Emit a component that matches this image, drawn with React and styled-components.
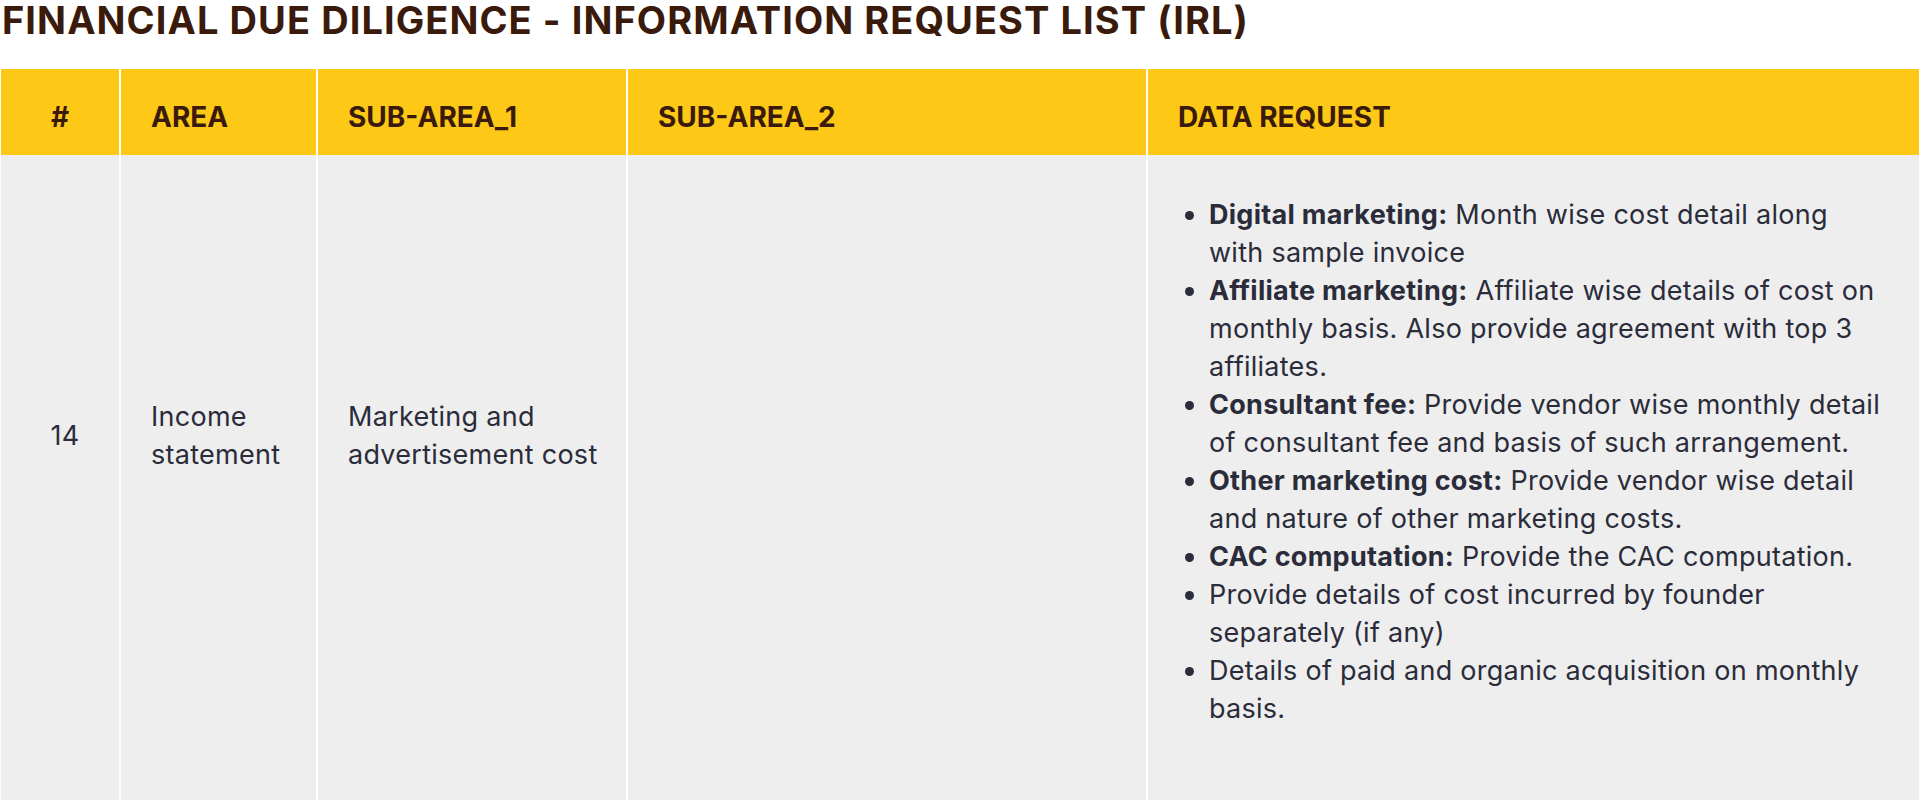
import React from "react";
import styled, { createGlobalStyle } from "styled-components";

const Global = createGlobalStyle`
  html, body { margin: 0; padding: 0; background: #ffffff; }
  body { font-family: Inter, "Noto Sans", sans-serif; -webkit-font-smoothing: antialiased; }
  * { box-sizing: border-box; }
`;

const COLS = "120px 197px 310px 520px 773px";

const Page = styled.div`
  width: 1920px;
  display: flex;
  flex-direction: column;
`;

const Title = styled.h1`
  margin: 0 0 29px 0;
  padding-left: 2px;
  font-family: Inter, sans-serif;
  font-size: 38px;
  line-height: 40px;
  font-weight: 700;
  color: #3a1a0a;
  letter-spacing: 0.028em;
  text-transform: uppercase;
  white-space: nowrap;
`;

const Table = styled.div`
  display: flex;
  flex-direction: column;
`;

const HeadRow = styled.div`
  display: grid;
  grid-template-columns: ${COLS};
  height: 86px;
  background: #fdc816;
`;

const HeadCell = styled.div`
  display: flex;
  align-items: center;
  justify-content: ${(p) => (p.$center ? "center" : "flex-start")};
  padding: 10px 30px 0;
  border-left: 1px solid #ffffff;
  border-right: 1px solid #ffffff;
  font-size: 28px;
  line-height: 34px;
  font-weight: 700;
  color: #3a1a0a;
`;

const BodyRow = styled.div`
  display: grid;
  grid-template-columns: ${COLS};
  background: #eeeeee;
`;

const Cell = styled.div`
  display: flex;
  align-items: center;
  justify-content: ${(p) => (p.$center ? "center" : "flex-start")};
  text-align: ${(p) => (p.$center ? "center" : "left")};
  padding: 0 20px 91px 30px;
  border-left: 1px solid #ffffff;
  border-right: 1px solid #ffffff;
  font-size: 27px;
  line-height: 38px;
  letter-spacing: 0.01em;
  color: #2a2c3a;
`;

const DataCell = styled.div`
  padding: 41px 38px 80px 30px;
  border-left: 1px solid #ffffff;
  border-right: 1px solid #ffffff;
  font-size: 27px;
  line-height: 38px;
  letter-spacing: 0.01em;
  color: #2a2c3a;
`;

const List = styled.ul`
  margin: 0;
  padding-left: 31px;
  list-style: disc;
`;

const Item = styled.li`
  padding: 0;
`;

const Lead = styled.strong`
  font-weight: 700;
`;

const items = [
  { lead: "Digital marketing:", text: "Month wise cost detail along with sample invoice" },
  { lead: "Affiliate marketing:", text: "Affiliate wise details of cost on monthly basis. Also provide agreement with top 3 affiliates." },
  { lead: "Consultant fee:", text: "Provide vendor wise monthly detail of consultant fee and basis of such arrangement." },
  { lead: "Other marketing cost:", text: "Provide vendor wise detail and nature of other marketing costs." },
  { lead: "CAC computation:", text: "Provide the CAC computation." },
  { lead: null, text: "Provide details of cost incurred by founder separately (if any)" },
  { lead: null, text: "Details of paid and organic acquisition on monthly basis." },
];

export default function App() {
  return (
    <Page>
      <Global />
      <Title>Financial Due Diligence - Information Request List (IRL)</Title>
      <Table>
        <HeadRow>
          <HeadCell $center>#</HeadCell>
          <HeadCell>AREA</HeadCell>
          <HeadCell>SUB-AREA_1</HeadCell>
          <HeadCell>SUB-AREA_2</HeadCell>
          <HeadCell>DATA REQUEST</HeadCell>
        </HeadRow>
        <BodyRow>
          <Cell $center>14</Cell>
          <Cell>Income statement</Cell>
          <Cell>Marketing and advertisement cost</Cell>
          <Cell />
          <DataCell>
            <List>
              {items.map((it, i) => (
                <Item key={i}>
                  {it.lead && <Lead>{it.lead}</Lead>}
                  {it.lead ? " " : ""}
                  {it.text}
                </Item>
              ))}
            </List>
          </DataCell>
        </BodyRow>
      </Table>
    </Page>
  );
}
